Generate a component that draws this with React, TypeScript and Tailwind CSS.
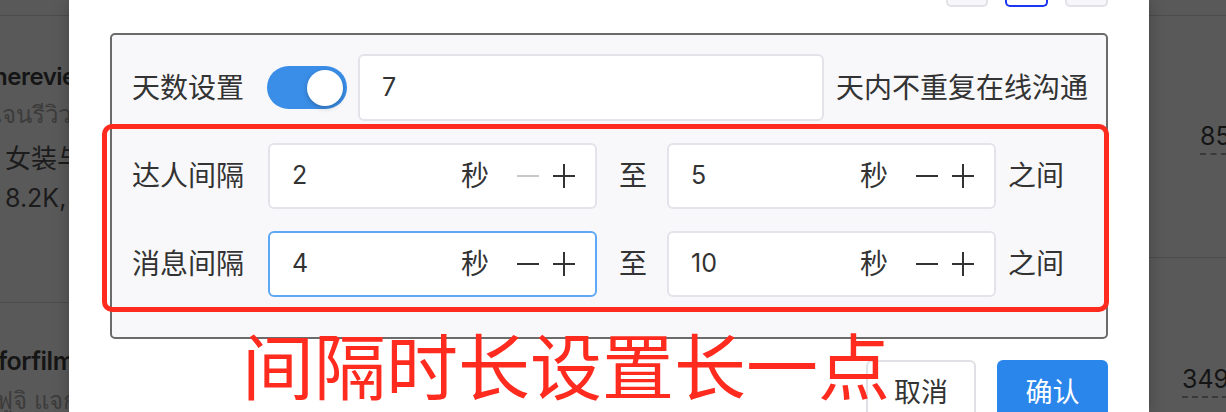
import React from "react";

function Minus({ disabled }: { disabled?: boolean }) {
  return (
    <svg width="22" height="24" viewBox="0 0 22 24" className="shrink-0">
      <line x1="0" y1="12" x2="22" y2="12" stroke={disabled ? "#c9c9cc" : "#333"} strokeWidth="2" />
    </svg>
  );
}

function Plus() {
  return (
    <svg width="22" height="24" viewBox="0 0 22 24" className="shrink-0">
      <line x1="0" y1="12" x2="22" y2="12" stroke="#333" strokeWidth="2" />
      <line x1="11" y1="0" x2="11" y2="24" stroke="#333" strokeWidth="2" />
    </svg>
  );
}

function NumInput({ value, focused, minusDisabled }: { value: string; focused?: boolean; minusDisabled?: boolean }) {
  return (
    <div
      className={
        "flex h-[66px] w-[329px] shrink-0 items-center rounded-[6px] border-2 bg-white pl-[22px] pr-[20px] " +
        (focused ? "border-[#5ea9f5]" : "border-[#e3e3e9]")
      }
    >
      <span className="flex-1 text-[25px] text-[#333]">{value}</span>
      <span className="text-[28px] leading-none text-[#333]">秒</span>
      <div className="ml-[28px] flex items-center gap-[14px]">
        <Minus disabled={minusDisabled} />
        <Plus />
      </div>
    </div>
  );
}

function IntervalRow({ label, a, b, aFocused, aMinusDisabled }: { label: string; a: string; b: string; aFocused?: boolean; aMinusDisabled?: boolean }) {
  return (
    <div className="flex h-[66px] items-center">
      <span className="w-[112px] shrink-0 text-[28px] leading-none text-[#333]">{label}</span>
      <div className="ml-[24px]">
        <NumInput value={a} focused={aFocused} minusDisabled={aMinusDisabled} />
      </div>
      <span className="ml-[22px] text-[28px] leading-none text-[#333]">至</span>
      <div className="ml-[20px]">
        <NumInput value={b} />
      </div>
      <span className="ml-[12px] text-[28px] leading-none text-[#333]">之间</span>
    </div>
  );
}

export default function App() {
  return (
    <div className="relative flex h-[412px] w-[1226px] overflow-hidden bg-[#595959] [font-family:Inter,'Noto_Sans_CJK_SC','Noto_Sans',sans-serif]">
      {/* left background table (dimmed) */}
      <div className="w-[69px] shrink-0 overflow-hidden">
        <div className="h-[16px] border-b border-[#4c4c4c]" />
        <div className="h-[242px] border-b border-[#4c4c4c]">
          <div className="ml-[-7px] mt-[45px] whitespace-nowrap text-[24px] font-semibold leading-[32px] tracking-[-0.5px] text-[#151515]">hereview</div>
          <div className="ml-[-6px] mt-[6px] whitespace-nowrap text-[24px] leading-[32px] text-[#3c3c3c]">เจนรีวิว</div>
          <div className="ml-[5px] mt-[12px] whitespace-nowrap text-[26px] leading-[32px] text-[#1c1c1c]">女装与</div>
          <div className="ml-[5px] mt-[7px] whitespace-nowrap text-[25px] leading-[32px] text-[#1c1c1c]">8.2K,</div>
        </div>
        <div className="ml-[-2px] mt-[42px] whitespace-nowrap text-[25px] font-semibold leading-[32px] tracking-[-0.5px] text-[#151515]">forfilm</div>
        <div className="ml-[-4px] mt-[8px] whitespace-nowrap text-[24px] leading-[32px] text-[#3c3c3c]">ฟูจิ แจก</div>
        <div className="ml-[5px] mt-[11px] whitespace-nowrap text-[26px] leading-[32px] text-[#1c1c1c]">女装与</div>
      </div>

      {/* modal */}
      <div className="relative z-10 flex w-[1080px] shrink-0 flex-col bg-white px-[41px] shadow-[0_0_14px_rgba(0,0,0,0.25)]">
        <div className="flex h-[7px] shrink-0 justify-end gap-[17px]">
          <div className="h-[7px] w-[42px] rounded-b-[5px] border-x-2 border-b-2 border-[#e2e2e8] bg-[#f7f7f9]" />
          <div className="h-[7px] w-[43px] rounded-b-[5px] border-x-2 border-b-2 border-[#1c36f2] bg-white" />
          <div className="h-[7px] w-[43px] rounded-b-[5px] border-x-2 border-b-2 border-[#e2e2e8] bg-[#f7f7f9]" />
        </div>

        <div className="mt-[26px] h-[306px] shrink-0 rounded-[5px] border-2 border-[#6b6b6b] bg-[#f8f8fa] pl-[20px] pt-[19px]">
          <div className="flex h-[67px] items-center">
            <span className="w-[112px] shrink-0 text-[28px] leading-none text-[#333]">天数设置</span>
            <div className="relative ml-[23px] h-[43px] w-[80px] shrink-0 rounded-full bg-[#3a8ee8]">
              <div className="absolute right-[4px] top-[3.5px] h-[36px] w-[36px] rounded-full bg-white shadow-[0_2px_5px_rgba(0,0,0,0.25)]" />
            </div>
            <div className="ml-[11px] flex h-[67px] w-[466px] shrink-0 items-center rounded-[6px] border-2 border-[#e3e3e9] bg-white pl-[22px]">
              <span className="text-[25px] text-[#333]">7</span>
            </div>
            <span className="ml-[12px] whitespace-nowrap text-[28px] leading-none text-[#333]">天内不重复在线沟通</span>
          </div>
          <div className="mt-[22px]">
            <IntervalRow label="达人间隔" a="2" b="5" aMinusDisabled />
          </div>
          <div className="mt-[22px]">
            <IntervalRow label="消息间隔" a="4" b="10" aFocused />
          </div>
        </div>

        <div className="mt-[21px] flex shrink-0 justify-end gap-[21px]">
          <button className="flex h-[66px] w-[110px] items-center justify-center rounded-[6px] border-2 border-[#e0e0e6] bg-white text-[27px] text-[#333]">取消</button>
          <button className="flex h-[66px] w-[111px] items-center justify-center rounded-[6px] bg-[#2a86ea] text-[27px] text-white">确认</button>
        </div>
      </div>

      {/* right background table (dimmed) */}
      <div className="w-[77px] shrink-0 overflow-hidden">
        <div className="h-[16px] border-b border-[#4c4c4c]" />
        <div className="h-[242px] border-b border-[#4c4c4c] pl-[51px] pt-[104px]">
          <span className="whitespace-nowrap border-b-2 border-dashed border-[#3a3a3a] pb-[2px] text-[25px] leading-[32px] text-[#151515]">85.5K</span>
        </div>
        <div className="pl-[33px] pt-[105px]">
          <span className="whitespace-nowrap border-b-2 border-dashed border-[#3a3a3a] pb-[2px] text-[25px] leading-[32px] text-[#151515]">349.2K</span>
        </div>
      </div>

      {/* annotation: red box */}
      <div className="pointer-events-none absolute left-[102px] top-[124px] z-20 h-[188px] w-[1007px] rounded-[10px] border-[5px] border-[#ff2b1f]" />
      {/* annotation: red text */}
      <div className="pointer-events-none absolute left-[242px] top-[327px] z-20 whitespace-nowrap text-[72px] leading-none text-[#ff2b1f] [font-family:'Noto_Sans_CJK_SC',sans-serif]">
        间隔时长设置长一点
      </div>
    </div>
  );
}
